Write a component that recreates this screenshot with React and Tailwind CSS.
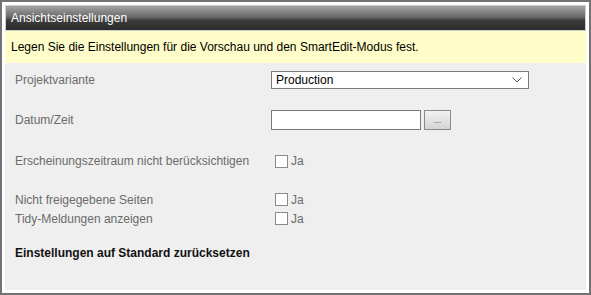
import React from "react";

function Checkbox({ label }) {
  return (
    <span className="flex items-center ml-[4px]">
      <span className="w-[13px] h-[13px] border border-[#8a8a8a] bg-white" />
      <span className="ml-[3px] text-[#6b6b6b]">{label}</span>
    </span>
  );
}

function Row({ label, className = "", children }) {
  return (
    <div className={`flex items-center ${className}`}>
      <div className="w-[256px] shrink-0 text-[#6b6b6b]">{label}</div>
      {children}
    </div>
  );
}

export default function App() {
  return (
    <div
      className="w-[591px] h-[295px] border-2 border-[#737373] bg-white p-[3px] flex flex-col text-[12px] leading-none"
      style={{ fontFamily: '"Liberation Sans", Arial, sans-serif' }}
    >
      {/* Header */}
      <div className="h-[26px] shrink-0 border border-[#cfcfcf] bg-[linear-gradient(#a4a4a4,#6a6a6a_45%,#3c3c3c_60%,#2b2b2b)] flex items-center px-[5px] text-white">
        Ansichtseinstellungen
      </div>

      {/* Hint */}
      <div className="h-[32px] shrink-0 bg-[#fefcc8] flex items-center px-[6px] text-black">
        Legen Sie die Einstellungen für die Vorschau und den SmartEdit-Modus fest.
      </div>

      {/* Settings */}
      <div className="flex-1 bg-[#efefef] px-[10px] pt-[8px]">
        <Row label="Projektvariante" className="h-[18px]">
          <div className="w-[258px] h-[18px] border border-[#7a7a7a] bg-white flex items-center justify-between pl-[4px] pr-[6px] text-black">
            <span>Production</span>
            <svg width="10" height="6" viewBox="0 0 10 6" fill="none">
              <path d="M0.5 0.5 L5 5 L9.5 0.5" stroke="#555" strokeWidth="1" />
            </svg>
          </div>
        </Row>

        <Row label="Datum/Zeit" className="h-[20px] mt-[21px]">
          <div className="w-[150px] h-[20px] border border-[#7a7a7a] bg-white" />
          <div className="ml-[3px] w-[27px] h-[20px] border border-[#8a8a8a] bg-[linear-gradient(#f2f2f2,#d4d4d4)] flex items-end justify-center pb-[4px] text-[9px] text-[#555]">
            ...
          </div>
        </Row>

        <Row label="Erscheinungszeitraum nicht berücksichtigen" className="h-[20px] mt-[21px]">
          <Checkbox label="Ja" />
        </Row>

        <Row label="Nicht freigegebene Seiten" className="h-[19px] mt-[19px]">
          <Checkbox label="Ja" />
        </Row>

        <Row label="Tidy-Meldungen anzeigen" className="h-[19px]">
          <Checkbox label="Ja" />
        </Row>

        <div className="h-[19px] mt-[15px] flex items-center font-bold text-[#111]">
          Einstellungen auf Standard zurücksetzen
        </div>
      </div>
    </div>
  );
}
